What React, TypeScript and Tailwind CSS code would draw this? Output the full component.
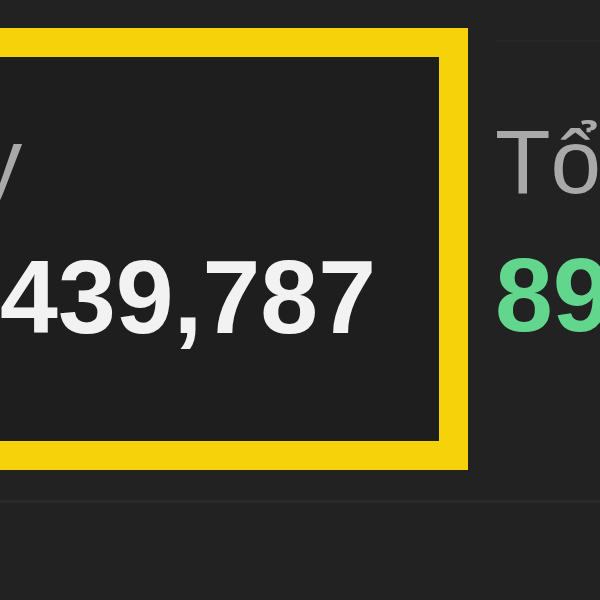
import React from 'react';

const App = () => {
  const stats = [
    { label: 'Hôm nay', value: '439,787', color: 'text-[#f2f2f2]', active: true },
    { label: 'Tổng cộng', value: '89,214,560', color: 'text-[#62d68d]', active: false },
  ];

  return (
    <div className="w-[600px] h-[600px] overflow-hidden bg-[#222222]" style={{ fontFamily: '"Liberation Sans", Arial, sans-serif' }}>
      <div className="flex gap-[27px] -ml-[418px] pt-[28px] pb-[30px] border-b-[3px] border-[#2a2a2c] w-max">
        {stats.map((s) =>
          s.active ? (
            <div
              key={s.label}
              className="w-[886px] h-[442px] border-[29px] border-[#f6d20a] bg-[#1e1e1e] flex flex-col pt-[58px] pl-[47px] pr-[63px]"
            >
              <span className="self-start text-[91px] leading-none text-[#a9a9a9]">{s.label}</span>
              <span className={`self-end mt-[39px] text-[104px] leading-none font-bold ${s.color}`}>{s.value}</span>
            </div>
          ) : (
            <div key={s.label} className="flex flex-col mt-[12px] pt-[75px] border-t-2 border-[#262628] whitespace-nowrap">
              <span className="text-[91px] leading-none text-[#a9a9a9]">{s.label}</span>
              <span className={`mt-[35px] text-[104px] leading-none font-bold ${s.color}`}>{s.value}</span>
            </div>
          )
        )}
      </div>
    </div>
  );
};

export default App;
